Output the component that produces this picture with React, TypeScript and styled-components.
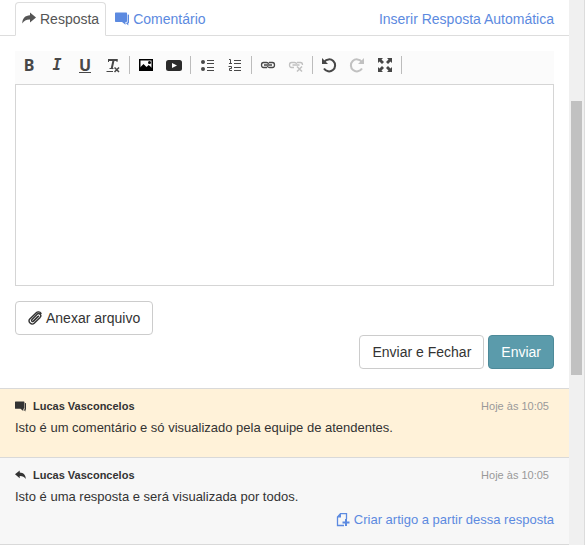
import React from "react";
import styled, { createGlobalStyle, css } from "styled-components";

const GlobalStyle = createGlobalStyle`
  * { box-sizing: border-box; }
  html, body, #root { height: 100%; }
  body {
    margin: 0;
    overflow: hidden;
    background: #fff;
    color: #333;
    font-family: "Liberation Sans", Arial, sans-serif;
    font-size: 14px;
    line-height: 20px;
  }
  button, textarea { font: inherit; color: inherit; }
`;

const Page = styled.div`
  display: flex;
  height: 100%;
  overflow: hidden;
`;

const Content = styled.main`
  flex: 1;
  min-width: 0;
`;

const ScrollTrack = styled.div`
  flex: 0 0 16px;
  padding: 101px 2px 0;
  background: #f0f0f0;
  border-right: 1px solid #dcdcdc;
`;

const ScrollThumb = styled.div`
  height: 274px;
  background: #c1c1c1;
`;

const Header = styled.header`
  display: flex;
  align-items: flex-end;
  justify-content: space-between;
  padding: 2px 15px 0;
  height: 36px;
  border-bottom: 1px solid #ddd;
`;

const Tabs = styled.nav`
  display: flex;
  margin-bottom: -1px;
`;

const Tab = styled.button<{ $active?: boolean }>`
  display: flex;
  align-items: center;
  gap: 4px;
  height: 34px;
  padding: 0 6px;
  border: 1px solid transparent;
  border-radius: 4px 4px 0 0;
  background: none;
  color: #5c8ae0;
  ${(p) =>
    p.$active &&
    css`
      color: #555;
      background: #fff;
      border-color: #ddd #ddd #fff;
    `}
  &:last-child { padding-left: 8px; }
`;

const Link = styled.a`
  display: flex;
  align-items: center;
  gap: 4px;
  color: #5c8ae0;
  text-decoration: none;
`;

const HeaderLink = styled(Link)`
  height: 32px;
`;

const Composer = styled.section`
  padding: 15px 15px 19px;
`;

const Toolbar = styled.div`
  display: flex;
  align-items: center;
  height: 33px;
  padding-bottom: 5px;
  background: #fbfbfb;
`;

const Tool = styled.button`
  display: flex;
  align-items: center;
  justify-content: center;
  width: 28px;
  height: 28px;
  padding: 0;
  border: 0;
  background: none;
  color: #474747;
  &:disabled { color: #c1c1c1; }
`;

const Letter = styled.span<{ $italic?: boolean; $underline?: boolean }>`
  height: 16px;
  font-family: ${(p) => (p.$italic ? '"DejaVu Sans Mono"' : '"Noto Sans"')}, sans-serif;
  font-size: ${(p) => (p.$italic ? "15px" : "16px")};
  font-weight: 700;
  line-height: 17px;
  font-style: ${(p) => (p.$italic ? "italic" : "normal")};
  border-bottom: 1px solid ${(p) => (p.$underline ? "currentColor" : "transparent")};
`;

const Separator = styled.span`
  width: 1px;
  height: 18px;
  margin: 0 2px;
  background: #bcbcbc;
`;

const Editor = styled.textarea`
  display: block;
  width: 100%;
  height: 202px;
  padding: 12px;
  border: 1px solid #d5d5d5;
  background: #fff;
  resize: none;
  outline: 0;
`;

const Attach = styled.div`
  padding-top: 15px;
`;

const Actions = styled.div`
  display: flex;
  justify-content: flex-end;
  gap: 4px;
`;

const Button = styled.button<{ $primary?: boolean }>`
  display: inline-flex;
  align-items: center;
  gap: 4px;
  height: 34px;
  padding: 0 12px;
  border: 1px solid ${(p) => (p.$primary ? "#4d8a99" : "#ccc")};
  border-radius: 4px;
  background: ${(p) => (p.$primary ? "#5b9bab" : "#fff")};
  color: ${(p) => (p.$primary ? "#fff" : "#333")};
`;

const Message = styled.article<{ $note?: boolean }>`
  padding: 7px 15px 19px;
  border-top: 1px solid #d9d9d9;
  background: ${(p) => (p.$note ? "#fff2d9" : "#f7f7f7")};
  &:last-child {
    padding-bottom: 14px;
    border-bottom: 1px solid #d9d9d9;
  }
`;

const MessageHead = styled.header`
  display: flex;
  align-items: center;
  gap: 7px;
  height: 20px;
  padding-right: 5px;
  font-size: 11px;
`;

const Time = styled.time`
  margin-left: auto;
  color: #999;
`;

const MessageText = styled.p`
  margin: 2px 0 0;
  font-size: 13px;
`;

const MessageFoot = styled.footer`
  display: flex;
  justify-content: flex-end;
  margin-top: 3px;
  font-size: 13px;
`;

const svgProps = (size: number, box: number) => ({
  width: size,
  height: size,
  viewBox: `0 0 ${box} ${box}`,
  fill: "none",
  "aria-hidden": true,
});

const ArrowIcon = ({ size = 14, flip = false }: { size?: number; flip?: boolean }) => (
  <svg {...svgProps(size, 14)}>
    <path
      transform={flip ? "matrix(-1 0 0 1 14 0)" : undefined}
      fill="currentColor"
      d="M8 0.500 14 5.500 8 10.500V7.500C4.300 7.400 2 8.600.3 11.500 .3 6.500 3.200 3.500 8 3.300Z"
    />
  </svg>
);

const BubblesIcon = ({ size = 14 }: { size?: number }) => (
  <svg {...svgProps(size, 14)}>
    <g fill="currentColor">
      <path d="M.7 .5h10.600q.7 0 .7.7v8.100q0 .7-.7.7H10.500v2.800L7 10H.7Q0 10 0 9.300V1.200Q0 .5 .7 .5Z" />
      <path d="M12.600 2.500h.8q.6 0 .6.7v7.300q0 .7-.7.7V13.500L11 11.200V10.700h1q.6 0 .6-.7Z" />
    </g>
  </svg>
);

const ClipIcon = () => (
  <svg {...svgProps(14, 14)} stroke="currentColor" strokeWidth="1.4" strokeLinecap="round">
    <path d="M10.500 5.200 5.800 10.100C4.500 11.400 2.700 9.700 4 8.400L8.900 3.400C11 1.300 14.200 4 12.100 6.400L6.200 12.200C3.600 14.700-.8 10.800 1.800 8L8 1.900C9.600.3 12 .6 13 2.400" />
    <path d="M9.700 5.100 5 9.800" strokeWidth="1" />
  </svg>
);

const PageAddIcon = () => (
  <svg {...svgProps(14, 14)} stroke="currentColor">
    <path d="M8 12.500H1.500V4L4.500 .700H10.500V6" strokeWidth="1.300" />
    <path d="M1 4.500 5 .500V4.500Z" fill="currentColor" stroke="none" />
    <path d="M10 6v7M6.500 9.500h7" strokeWidth="2" />
  </svg>
);

const RemoveFormatIcon = () => (
  <svg {...svgProps(16, 16)} stroke="currentColor">
    <path d="M3.500 3H12.500M8.600 3 6.600 12" strokeWidth="2" />
    <path d="M3.500 2v3M12 2v3M1.500 14.500H8M4.500 11.500H8.500" />
    <path d="m9.500 10.500 4.500 4.500m0-4.500-4.500 4.500" strokeWidth="1.500" />
  </svg>
);

const ImageIcon = () => (
  <svg {...svgProps(16, 16)}>
    <path d="M1.750 2.750h12.500v10.500H1.750Z" stroke="#000" strokeWidth="1.500" />
    <path d="M2 13V10.500L5.500 7l3 3 2.200-2L14 11v2Z" fill="#000" />
    <circle cx="11.500" cy="5.500" r="1.500" fill="#000" />
  </svg>
);

const VideoIcon = () => (
  <svg {...svgProps(16, 16)}>
    <rect y="3" width="16" height="11" rx="2.500" fill="#2b2b2b" />
    <path d="M6 6v5l5-2.500Z" fill="#fff" />
  </svg>
);

const BulletsIcon = () => (
  <svg {...svgProps(16, 16)}>
    <circle cx="4" cy="5" r="2" fill="currentColor" />
    <circle cx="4" cy="12" r="2" fill="currentColor" />
    <path d="M8 3.500h7M8 6.500h7M8 10.500h7M8 13.500h7" stroke="currentColor" />
  </svg>
);

const NumbersIcon = () => (
  <svg {...svgProps(16, 16)} stroke="currentColor">
    <path d="M2 2.500h1.500v4M2 6.500h3M1.500 9.500h3v2h-2v2H5M7 3.500h7M7 6.500h7M7 10.500h7M7 13.500h7" />
  </svg>
);

const LinkIcon = ({ broken = false }: { broken?: boolean }) => (
  <svg {...svgProps(16, 16)} stroke="currentColor">
    <path
      d={
        broken
          ? "M6 10.500H3.500Q1.500 10.500 1.500 8t2-2.500h3Q8.500 5.500 8.500 7M9 5.500h3.500Q14.500 5.500 14.500 8M4.500 8h7"
          : "M7 10.500H3.500Q1.500 10.500 1.500 8t2-2.500h3Q8.500 5.500 8.500 7M9 5.500h3.500Q14.500 5.500 14.500 8t-2 2.500h-3Q7.500 10.500 7.500 9M4 8h8"
      }
      strokeWidth="1.300"
    />
    {broken && <path d="m9 9.500 5 5m0-5-5 5" strokeWidth="1.500" />}
  </svg>
);

const TurnIcon = ({ flip = false }: { flip?: boolean }) => (
  <svg {...svgProps(16, 16)}>
    <g transform={flip ? "matrix(-1 0 0 1 16 0)" : undefined}>
      <path d="M3.300 4.800A6 6 0 1 1 3 11.500" stroke="currentColor" strokeWidth="2" />
      <path d="M1 1v6h6Z" fill="currentColor" />
    </g>
  </svg>
);

const ExpandIcon = () => (
  <svg {...svgProps(16, 16)}>
    <path
      d="M1 1h5L4.500 2.500 7 5 5 7 2.500 4.500 1 6ZM15 1v5L13.500 4.500 11 7 9 5l2.500-2.500L10 1ZM15 15h-5l1.500-1.500L9 11l2-2 2.500 2.500L15 10ZM1 15v-5l1.500 1.500L5 9l2 2-2.500 2.500L6 15Z"
      fill="currentColor"
    />
  </svg>
);

type ToolItem = { label: string; icon: React.ReactNode; disabled?: boolean };

const toolGroups: ToolItem[][] = [
  [
    { label: "Negrito", icon: <Letter>B</Letter> },
    { label: "Itálico", icon: <Letter $italic>I</Letter> },
    { label: "Sublinhado", icon: <Letter $underline>U</Letter> },
    { label: "Remover formatação", icon: <RemoveFormatIcon /> },
  ],
  [
    { label: "Imagem", icon: <ImageIcon /> },
    { label: "Vídeo", icon: <VideoIcon /> },
  ],
  [
    { label: "Lista com marcadores", icon: <BulletsIcon /> },
    { label: "Lista numerada", icon: <NumbersIcon /> },
  ],
  [
    { label: "Inserir link", icon: <LinkIcon /> },
    { label: "Remover link", icon: <LinkIcon broken />, disabled: true },
  ],
  [
    { label: "Desfazer", icon: <TurnIcon /> },
    { label: "Refazer", icon: <TurnIcon flip />, disabled: true },
    { label: "Maximizar", icon: <ExpandIcon /> },
  ],
];

export default function App() {
  return (
    <Page>
      <GlobalStyle />
      <Content>
        <Header>
          <Tabs>
            <Tab type="button" $active>
              <ArrowIcon />
              Resposta
            </Tab>
            <Tab type="button">
              <BubblesIcon />
              Comentário
            </Tab>
          </Tabs>
          <HeaderLink href="#respostas">Inserir Resposta Automática</HeaderLink>
        </Header>

        <Composer>
          <Toolbar role="toolbar" aria-label="Formatação">
            {toolGroups.map((group, i) => (
              <React.Fragment key={i}>
                {group.map((tool) => (
                  <Tool key={tool.label} type="button" aria-label={tool.label} disabled={tool.disabled}>
                    {tool.icon}
                  </Tool>
                ))}
                <Separator />
              </React.Fragment>
            ))}
          </Toolbar>
          <Editor aria-label="Resposta" />
          <Attach>
            <Button type="button">
              <ClipIcon />
              Anexar arquivo
            </Button>
          </Attach>
          <Actions>
            <Button type="button">Enviar e Fechar</Button>
            <Button type="submit" $primary>
              Enviar
            </Button>
          </Actions>
        </Composer>

        <section>
          <Message $note>
            <MessageHead>
              <BubblesIcon size={11} />
              <strong>Lucas Vasconcelos</strong>
              <Time>Hoje às 10:05</Time>
            </MessageHead>
            <MessageText>Isto é um comentário e só visualizado pela equipe de atendentes.</MessageText>
          </Message>
          <Message>
            <MessageHead>
              <ArrowIcon size={11} flip />
              <strong>Lucas Vasconcelos</strong>
              <Time>Hoje às 10:05</Time>
            </MessageHead>
            <MessageText>Isto é uma resposta e será visualizada por todos.</MessageText>
            <MessageFoot>
              <Link href="#artigo">
                <PageAddIcon />
                Criar artigo a partir dessa resposta
              </Link>
            </MessageFoot>
          </Message>
        </section>
      </Content>
      <ScrollTrack>
        <ScrollThumb />
      </ScrollTrack>
    </Page>
  );
}
